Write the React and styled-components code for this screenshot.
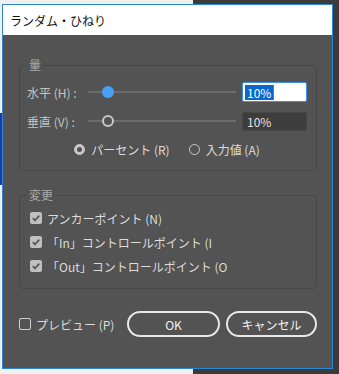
import React from 'react';
import styled, { createGlobalStyle } from 'styled-components';

const GlobalStyle = createGlobalStyle`
    html, body {
        margin: 0;
        padding: 0;
    }
    body {
        width: 339px;
        height: 374px;
        overflow: hidden;
        background:
            linear-gradient(#1c3d9c, #1c3d9c) 0 113px / 2px 72px no-repeat,
            linear-gradient(to right, #f0f0f0 0 193px, #3b3b3b 193px);
        font-family: "Noto Sans CJK JP", "Noto Sans", sans-serif;
    }
`;

const Screen = styled.div`
    padding: 4px 6px 5px 2px;
`;

const Dialog = styled.div`
    width: 331px;
    height: 365px;
    box-sizing: border-box;
    border: 1px solid #2d86d6;
    background: #535353;
    display: flex;
    flex-direction: column;
`;

const TitleBar = styled.div`
    height: 30px;
    flex-shrink: 0;
    background: #ffffff;
    display: flex;
    align-items: center;
    padding-left: 7px;
    font-size: 12px;
    color: #111111;
`;

const Body = styled.div`
    padding: 24px 15px 0 16px;
    display: flex;
    flex-direction: column;
`;

const Group = styled.fieldset`
    margin: ${p => p.$top || 0}px 0 0 0;
    padding: ${p => p.$pad};
    border: 1px solid #474747;
    border-radius: 4px;
    min-width: 0;
`;

const Legend = styled.legend`
    padding: 0 2px;
    font-size: 12px;
    line-height: 12px;
    color: #a9a9a9;
`;

const SliderRow = styled.div`
    display: grid;
    grid-template-columns: 55px 148px 65px;
    column-gap: 6px;
    align-items: center;
    height: 20px;
    margin-top: ${p => p.$top}px;
`;

const RowLabel = styled.span`
    font-size: 12px;
    color: #c4c4c4;
    white-space: nowrap;
`;

const Track = styled.div`
    position: relative;
    height: 20px;

    &::before {
        content: '';
        position: absolute;
        left: 0;
        right: 0;
        top: 9px;
        height: 2px;
        background: #6c6c6c;
    }
`;

const ThumbLane = styled.div`
    position: absolute;
    left: 0;
    right: 12px;
    top: 4px;
    height: 12px;
`;

const Thumb = styled.div`
    position: absolute;
    top: 0;
    width: 12px;
    height: 12px;
    box-sizing: border-box;
    border-radius: 50%;
    background: ${p => (p.$active ? '#46a0f5' : '#535353')};
    border: ${p => (p.$active ? 'none' : '2px solid #c9c9c9')};
`;

const Field = styled.div`
    height: ${p => (p.$active ? 20 : 19)}px;
    box-sizing: border-box;
    border: 1px solid ${p => (p.$active ? '#3f93e6' : '#474747')};
    border-radius: 2px;
    background: ${p => (p.$active ? '#ffffff' : '#3d3d3d')};
    color: ${p => (p.$active ? '#ffffff' : '#e2e2e2')};
    font-size: 12px;
    display: flex;
    align-items: center;
    padding-left: 2px;
`;

const Selected = styled.span`
    background: #0a67cc;
    padding: 0 2px;
    line-height: 15px;
    border-right: 1px solid #d05a20;
`;

const PlainValue = styled.span`
    padding-left: 2px;
`;

const RadioRow = styled.div`
    display: flex;
    justify-content: center;
    gap: 19px;
    height: 18px;
    margin-top: 9px;
`;

const Option = styled.label`
    display: flex;
    align-items: center;
    gap: 6px;
    font-size: 12px;
    color: #dcdcdc;
    white-space: nowrap;
`;

const Radio = styled.span`
    width: 11px;
    height: 11px;
    box-sizing: border-box;
    border-radius: 50%;
    border: 1px solid #c9c9c9;
    background: ${p => (p.$on ? '#c9c9c9' : 'transparent')};
    display: flex;
    align-items: center;
    justify-content: center;

    &::after {
        content: '';
        width: 5px;
        height: 5px;
        border-radius: 50%;
        background: ${p => (p.$on ? '#535353' : 'transparent')};
    }
`;

const CheckList = styled.div`
    display: flex;
    flex-direction: column;
    gap: 6px;
    padding-left: 3px;
`;

const CheckRow = styled.label`
    display: flex;
    align-items: center;
    gap: 5px;
    height: 18px;
    font-size: 12px;
    color: #dcdcdc;
    white-space: nowrap;
`;

const Box = styled.span`
    width: 12px;
    height: 12px;
    box-sizing: border-box;
    flex-shrink: 0;
    border-radius: 2px;
    background: ${p => (p.$on ? '#bfbfbf' : 'transparent')};
    border: ${p => (p.$on ? 'none' : '1px solid #cfcfcf')};
    display: flex;
    align-items: center;
    justify-content: center;
`;

const Footer = styled.div`
    display: flex;
    align-items: center;
    height: 26px;
    margin-top: 22px;
`;

const Preview = styled(CheckRow)`
    margin-right: auto;
    gap: 5px;
`;

const Button = styled.button`
    width: ${p => p.$w}px;
    height: 26px;
    margin-left: 6px;
    border: 2px solid #e8e8e8;
    border-radius: 13px;
    background: transparent;
    color: #f2f2f2;
    font-family: inherit;
    font-size: 12px;
    padding: 0;
`;

const Check = () => (
    <svg width="10" height="10" viewBox="0 0 10 10">
        <path d="M1.8 5.2 L4 7.4 L8.3 2.6" fill="none" stroke="#5c5c5c" strokeWidth="1.8" />
    </svg>
);

const Slider = ({ value, active }) => (
    <Track>
        <ThumbLane>
            <Thumb $active={active} style={{ left: `${value}%` }} />
        </ThumbLane>
    </Track>
);

function App() {
    const amount = { h: 10, v: 10 };

    return (
        <Screen>
            <GlobalStyle />
            <Dialog>
                <TitleBar>ランダム・ひねり</TitleBar>
                <Body>
                    <Group $pad="0 9px 12px 7px">
                        <Legend>量</Legend>
                        <SliderRow $top={11}>
                            <RowLabel>水平 (H) :</RowLabel>
                            <Slider value={amount.h} active />
                            <Field $active>
                                <Selected>{amount.h}%</Selected>
                            </Field>
                        </SliderRow>
                        <SliderRow $top={9}>
                            <RowLabel>垂直 (V) :</RowLabel>
                            <Slider value={amount.v} />
                            <Field>
                                <PlainValue>{amount.v}%</PlainValue>
                            </Field>
                        </SliderRow>
                        <RadioRow>
                            <Option><Radio $on />パーセント (R)</Option>
                            <Option><Radio />入力値 (A)</Option>
                        </RadioRow>
                    </Group>

                    <Group $top={18} $pad="8px 9px 13px 7px">
                        <Legend>変更</Legend>
                        <CheckList>
                            <CheckRow><Box $on><Check /></Box>アンカーポイント (N)</CheckRow>
                            <CheckRow><Box $on><Check /></Box>「In」コントロールポイント (I</CheckRow>
                            <CheckRow><Box $on><Check /></Box>「Out」コントロールポイント (O</CheckRow>
                        </CheckList>
                    </Group>

                    <Footer>
                        <Preview><Box />プレビュー (P)</Preview>
                        <Button $w={93}>OK</Button>
                        <Button $w={91}>キャンセル</Button>
                    </Footer>
                </Body>
            </Dialog>
        </Screen>
    );
}

export default App;
